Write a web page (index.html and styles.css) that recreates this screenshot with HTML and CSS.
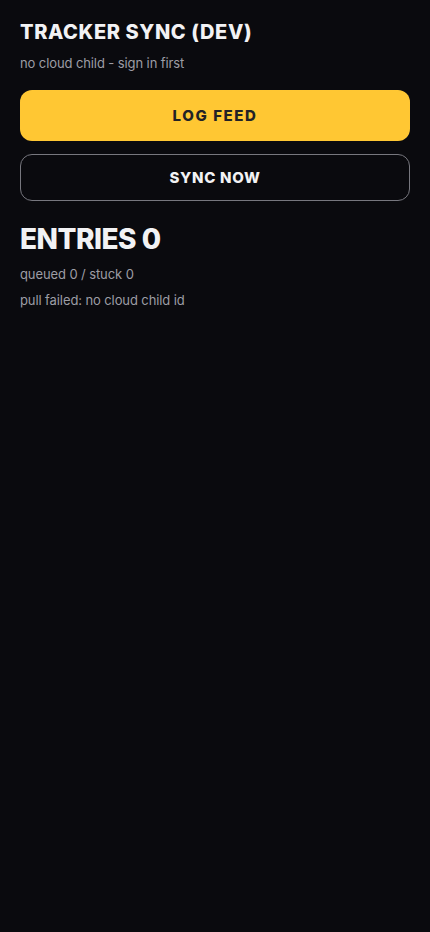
FILE: index.html
```html
<!DOCTYPE html>
<html lang="en">
<head>
	<meta charset="UTF-8">
	<title>Tracker Sync</title>
	<link rel="stylesheet" href="styles.css">
</head>
<body>
	<div class="page">
		<h1 class="title">TRACKER SYNC (DEV)</h1>
		<p class="sub">no cloud child - sign in first</p>
		<button class="btn btn-primary">LOG FEED</button>
		<button class="btn btn-outline">SYNC NOW</button>
		<h2 class="count">ENTRIES 0</h2>
		<p class="meta">queued 0 / stuck 0</p>
		<p class="meta">pull failed: no cloud child id</p>
	</div>
</body>
</html>
```

FILE: styles.css
```css
*{
	margin: 0;
	padding: 0;
	box-sizing: border-box;
}
html,body{
	background-color: #0a0a0e;
	height: 100%;
}
body{
	font-family: Inter, "Noto Sans", sans-serif;
	color: #f2f2f4;
}
.page{
	padding: 20px;
	display: flex;
	flex-direction: column;
}
.title{
	font-size: 20px;
	font-weight: 800;
	line-height: 24px;
	letter-spacing: 0.6px;
}
.sub{
	margin-top: 11px;
	font-size: 13px;
	line-height: 16px;
	letter-spacing: -0.1px;
	color: #9d9da5;
}
.btn{
	width: 100%;
	border-radius: 12px;
	font-family: inherit;
	font-size: 15px;
	font-weight: 800;
	letter-spacing: 1.6px;
	cursor: pointer;
}
.btn-primary{
	margin-top: 19px;
	height: 51px;
	border: none;
	background-color: #ffc733;
	color: #222226;
}
.btn-outline{
	margin-top: 13px;
	height: 47px;
	border: 1px solid #77777e;
	background-color: transparent;
	color: #f2f2f4;
	letter-spacing: 0.7px;
}
.count{
	margin-top: 21px;
	font-size: 28px;
	font-weight: 800;
	line-height: 34px;
	letter-spacing: -0.5px;
}
.meta{
	margin-top: 10px;
	font-size: 13px;
	line-height: 16px;
	letter-spacing: -0.1px;
	color: #9d9da5;
}
.count + .meta{
	margin-top: 10px;
}
```
